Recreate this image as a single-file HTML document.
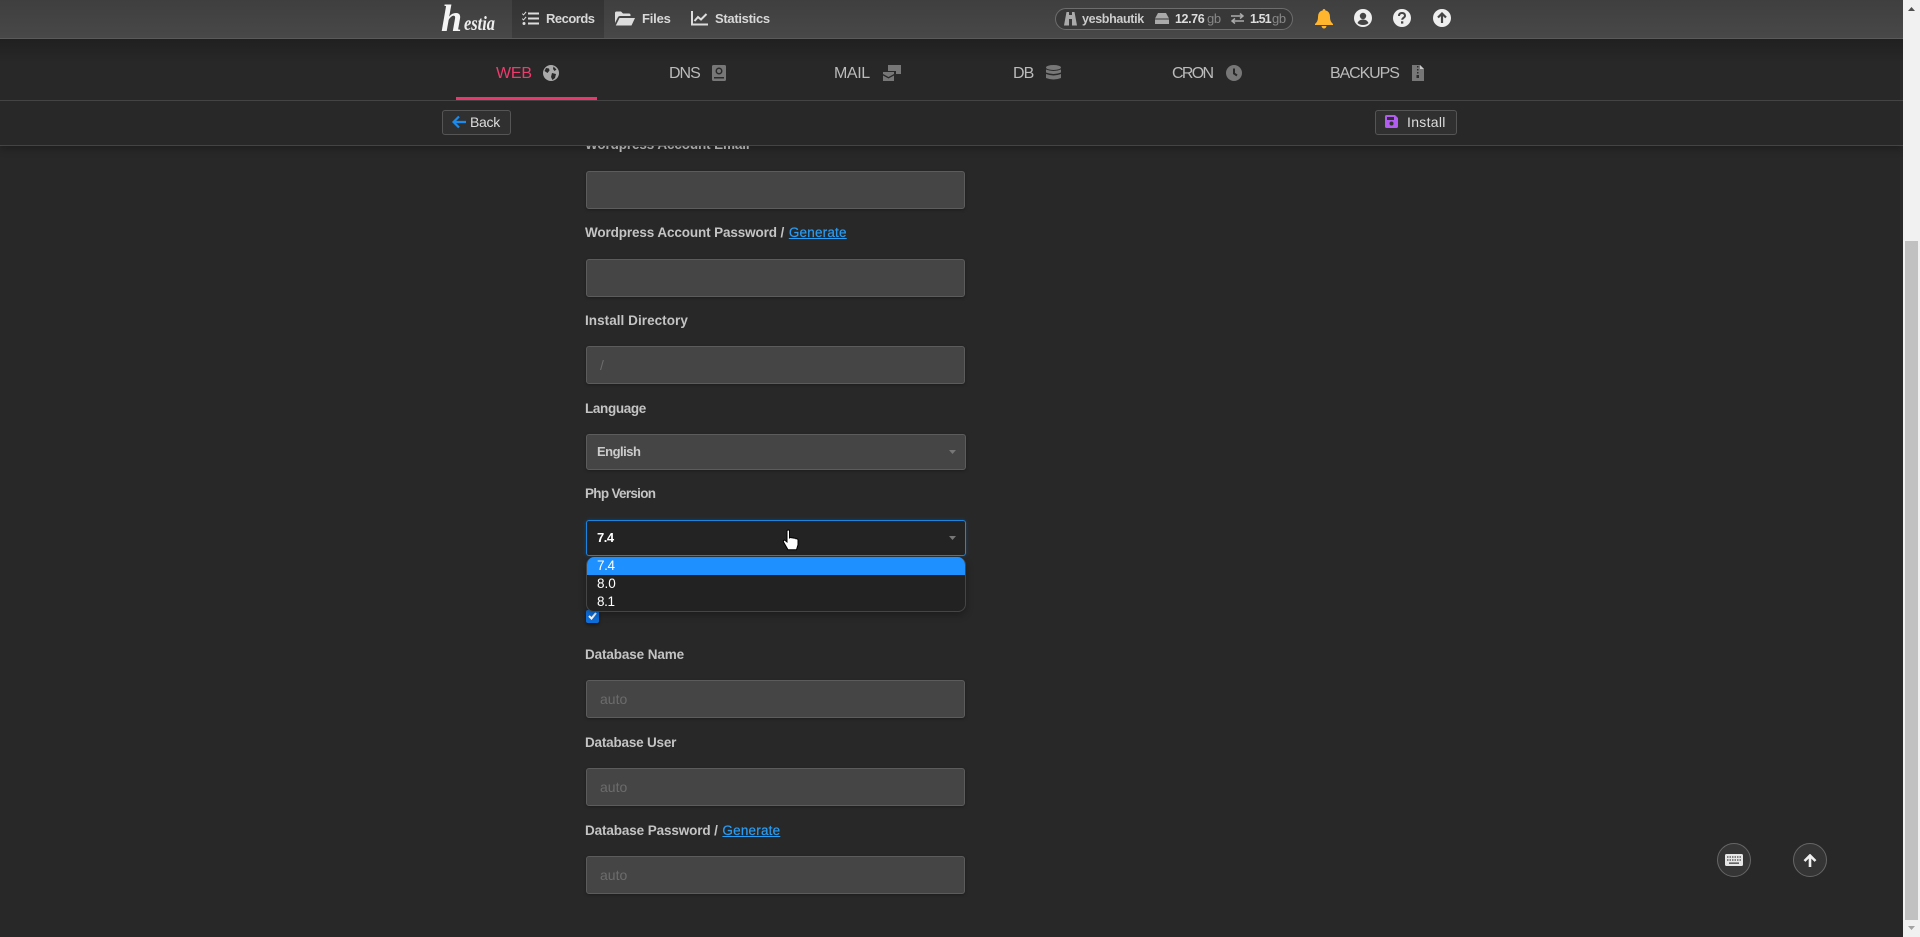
<!DOCTYPE html>
<html lang="en"><head><meta charset="utf-8"><title>Hestia</title>
<style>
*{box-sizing:border-box}
html,body{margin:0;padding:0;width:1920px;height:937px;overflow:hidden;background:#282828;font-family:"Liberation Sans",sans-serif}
.t{position:absolute;white-space:nowrap;line-height:20px;height:20px}
svg{position:absolute;display:block}
#hdr{position:absolute;left:0;top:0;width:1903px;height:39px;background:linear-gradient(#3f3f3f,#484848);border-bottom:1px solid #5a5a5a;z-index:5}
#rec{position:absolute;left:512px;top:0;width:92px;height:38px;background:linear-gradient(#333,#3c3c3c)}
#tabs{position:absolute;left:0;top:39px;width:1903px;height:62px;background:linear-gradient(#202020,#282828 40%);border-bottom:1px solid #444;z-index:5}
#bar{position:absolute;left:0;top:101px;width:1903px;height:45px;background:#282828;border-bottom:1px solid #444;box-shadow:0 3px 8px rgba(0,0,0,.25);z-index:4}
.nav{font-size:13px;font-weight:700;color:#d8d8d8;letter-spacing:-.5px}
.tab{font-size:16px;color:#bbb}
.btn{position:absolute;top:110px;height:25px;background:#303030;border:1px solid #555;border-radius:3px;z-index:6}
.lab{font-size:13.5px;font-weight:700;color:#c4c4c4;left:585px;letter-spacing:-.12px}
.lab a{color:#2a9df4;text-decoration:underline;font-weight:400;-webkit-text-stroke:.2px #2a9df4;letter-spacing:.2px;margin-left:1px}
.in{position:absolute;left:586px;width:379px;height:38px;background:#454545;border:1px solid #5c5c5c;border-radius:3px;box-shadow:0 1px 3px rgba(0,0,0,.3)}
.ph{font-size:14px;color:#6c6c6c;left:600px}
.opt{font-size:13.5px;color:#fff;left:597px;line-height:18px;height:18px}
.rnd{position:absolute;top:843px;width:34px;height:34px;border-radius:50%;background:#353535;border:1px solid #666}
</style></head><body>

<div id="hdr">
 <div id="rec"></div>
 <span class="t" style="left:441px;top:3px;font:italic 700 38px/32px 'Liberation Serif',serif;height:32px;color:#f4f4f4">h</span>
 <span class="t" style="left:464px;top:14px;font:italic 700 20px/20px 'Liberation Serif',serif;color:#eee;transform:scaleX(.82);transform-origin:left center">estia</span>

 <svg style="left:522px;top:11px" width="17" height="15" viewBox="0 0 17 15" fill="#ddd"><path d="M6 1.500h11v2H6zM6 6.500h11v2H6zM6 11.500h11v2H6zM.5 2.200l1 1L3.700.5l.8.7L1.500 4.600 0 3zM.5 7.200l1 1 2.200-2.700.8.7-3 3.400L0 8z"/><circle cx="2" cy="12.500" r="1.500"/></svg>
 <span class="t nav" style="left:546px;top:9px">Records</span>

 <svg style="left:615px;top:11px" width="20" height="16" viewBox="0 0 20 16" fill="#ddd"><path d="M0 2q0-1.500 1.500-1.500h4.500l2 2h6q1.500 0 1.500 1.500v1H5q-1.500 0-2.200 1.500L0 12z"/><path d="M4.500 7H20l-3.500 7.500H.8z"/></svg>
 <span class="t nav" style="left:642px;top:9px;letter-spacing:-.2px">Files</span>

 <svg style="left:691px;top:11px" width="17" height="15" viewBox="0 0 17 15" fill="none" stroke="#ddd" stroke-width="2"><path d="M1 0v13.500h16"/><path d="M3.500 10l3.500-4 3 2.500L15.500 3"/></svg>
 <span class="t nav" style="left:715px;top:9px;letter-spacing:-.3px">Statistics</span>

 <div style="position:absolute;left:1055px;top:8px;width:238px;height:22px;border:1px solid #6d6d6d;border-radius:11px;background:#383838"></div>
 <svg style="left:1064px;top:12px" width="13" height="14" viewBox="0 0 13 14" fill="#aaa"><path d="M2.500 0h2.500v3h3V0h2.500l2.500 13.500H8V7H5v6.500H0z"/></svg>
 <span class="t" style="left:1082px;top:9px;font-size:12.5px;font-weight:700;color:#ccc;letter-spacing:-.35px">yesbhautik</span>
 <svg style="left:1155px;top:13px" width="14" height="11" viewBox="0 0 14 11" fill="#aaa"><path d="M3 0h8l3 5.500H0z"/><path d="M0 6.500h14V11H0z"/></svg>
 <span class="t" style="left:1175px;top:9px;font-size:12.5px;font-weight:700;color:#ddd;letter-spacing:-.4px">12.76</span>
 <span class="t" style="left:1207px;top:9px;font-size:13px;color:#888;letter-spacing:-.3px">gb</span>
 <svg style="left:1231px;top:13px" width="13" height="11" viewBox="0 0 13 11" fill="none" stroke="#aaa" stroke-width="1.500"><path d="M0 3h12M9 .5L12 3 9 5.500M13 8H1M4 5.500L1 8l3 2.500"/></svg>
 <span class="t" style="left:1250px;top:9px;font-size:12.5px;font-weight:700;color:#ddd;letter-spacing:-.9px">1.51</span>
 <span class="t" style="left:1272px;top:9px;font-size:13px;color:#888;letter-spacing:-.3px">gb</span>

 <svg style="left:1315px;top:9px" width="18" height="20" viewBox="0 0 18 20" fill="#ffb52e"><path d="M9 0q1.300 0 1.300 1.400Q15 2.400 15 8c0 4 1.500 5.500 3 7v1H0v-1c1.500-1.500 3-3 3-7q0-5.600 4.700-6.600Q7.700 0 9 0z"/><path d="M6.500 17h5q-.5 2.500-2.500 2.500T6.500 17z"/></svg>
 <svg style="left:1354px;top:9px" width="18" height="18" viewBox="0 0 18 18"><circle cx="9" cy="9" r="9" fill="#eee"/><circle cx="9" cy="7" r="3.200" fill="#444"/><path d="M3.500 14q1.500-3.500 5.500-3.500t5.500 3.500q-2 2-5.500 2t-5.500-2z" fill="#444"/></svg>
 <svg style="left:1393px;top:9px" width="18" height="18" viewBox="0 0 18 18"><circle cx="9" cy="9" r="9" fill="#eee"/><path d="M6 7q0-3 3-3t3 2.800c0 2-2.800 2-2.800 4" fill="none" stroke="#444" stroke-width="2"/><rect x="8" y="12.300" width="2.300" height="2.300" fill="#444"/></svg>
 <svg style="left:1433px;top:9px" width="18" height="18" viewBox="0 0 18 18"><circle cx="9" cy="9" r="9" fill="#eee"/><path d="M9 14V5M5 8.500L9 4.500l4 4" fill="none" stroke="#444" stroke-width="2.200"/></svg>
</div>

<div id="tabs">
 <div style="position:absolute;left:456px;top:58px;width:141px;height:3px;background:#e8386d"></div>
 <span class="t tab" style="left:496px;top:25px;color:#f03a6e;letter-spacing:-.2px">WEB</span>
 <svg style="left:543px;top:26px" width="16" height="16" viewBox="0 0 16 16"><circle cx="8" cy="8" r="8" fill="#aaa"/><path d="M3 3l3 .5.5 2-2 2.500-3-2zM9 8l4 1-1 4-2.500 2-1.500-3zM10.500 1.500l3 3-2 1.500-1.500-2z" fill="#2a2a2a"/></svg>
 <span class="t tab" style="left:669px;top:25px;letter-spacing:-1px">DNS</span>
 <svg style="left:712px;top:26px" width="14" height="16" viewBox="0 0 14 16"><rect width="14" height="16" rx="1.500" fill="#777"/><circle cx="7" cy="6" r="3.500" fill="#2a2a2a"/><circle cx="7" cy="6" r="2" fill="#777"/><rect x="2" y="12" width="10" height="1.500" fill="#2a2a2a"/></svg>
 <span class="t tab" style="left:834px;top:25px;letter-spacing:-.4px">MAIL</span>
 <svg style="left:883px;top:26px" width="18" height="16" viewBox="0 0 18 16" fill="#777"><path d="M5 0h13v9h-5V6H5z"/><path d="M0 7h11v2L5.500 12 0 9zM0 10.500l5.500 3 5.500-3V16H0z"/></svg>
 <span class="t tab" style="left:1013px;top:25px;letter-spacing:-.9px">DB</span>
 <svg style="left:1046px;top:26px" width="15" height="16" viewBox="0 0 15 16" fill="#777"><ellipse cx="7.500" cy="2.500" rx="7.500" ry="2.500"/><path d="M0 4.500q7.500 3 15 0V7.500q-7.500 3-15 0zM0 9q7.500 3 15 0v4q-7.500 3-15 0z"/></svg>
 <span class="t tab" style="left:1172px;top:25px;letter-spacing:-1.700px">CRON</span>
 <svg style="left:1226px;top:26px" width="16" height="16" viewBox="0 0 16 16"><circle cx="8" cy="8" r="8" fill="#777"/><path d="M8 3.500v5l3 2" fill="none" stroke="#282828" stroke-width="2"/></svg>
 <span class="t tab" style="left:1330px;top:25px;letter-spacing:-1.100px">BACKUPS</span>
 <svg style="left:1412px;top:26px" width="12" height="16" viewBox="0 0 12 16"><path d="M0 0h8l4 4v12H0z" fill="#777"/><path d="M8 0v4h4z" fill="#ccc"/><path d="M5 1h1.500v1.500H5zM5 4h1.500v1.500H5zM5 7h1.500v1.500H5zM4.500 10h2.500v3H4.500z" fill="#2a2a2a"/></svg>
</div>

<div id="bar"></div>
<div class="btn" style="left:442px;width:69px"></div>
<svg style="left:452px;top:115px;z-index:7" width="14" height="14" viewBox="0 0 14 14" fill="none" stroke="#1a8cf0" stroke-width="2.200"><path d="M14 7H2M7 1.500L1.500 7 7 12.500"/></svg>
<span class="t" style="left:470px;top:112px;font-size:14px;color:#ddd;z-index:7;letter-spacing:-.3px">Back</span>
<div class="btn" style="left:1375px;width:82px"></div>
<svg style="left:1385px;top:115px;z-index:7" width="13" height="13" viewBox="0 0 13 13"><path d="M1.500 0H10l3 3v8.500q0 1.500-1.500 1.500h-10Q0 13 0 11.500v-10Q0 0 1.500 0z" fill="#b35cf2"/><rect x="2" y="2" width="7" height="3" fill="#303030"/><circle cx="6.500" cy="8.500" r="2" fill="#303030"/></svg>
<span class="t" style="left:1407px;top:112px;font-size:14px;color:#ddd;z-index:7;letter-spacing:.3px">Install</span>

<span class="t lab" style="top:135px">Wordpress Account Email</span>
<div class="in" style="top:171px"></div>
<span class="t lab" style="top:223px">Wordpress Account Password / <a>Generate</a></span>
<div class="in" style="top:259px"></div>
<span class="t lab" style="top:311px;letter-spacing:.05px">Install Directory</span>
<div class="in" style="top:346px"></div>
<span class="t ph" style="top:355px">/</span>
<span class="t lab" style="top:399px;letter-spacing:-.35px">Language</span>
<div class="in" style="top:434px;width:380px;height:36px"></div>
<span class="t" style="left:597px;top:442px;font-size:13px;font-weight:700;color:#ccc;letter-spacing:-.5px">English</span>
<svg style="left:949px;top:450px" width="7" height="4"><path d="M0 0h7L3.500 4z" fill="#777"/></svg>
<span class="t lab" style="top:484px;letter-spacing:-.7px">Php Version</span>
<div class="in" style="top:520px;width:380px;height:36px;background:#232323;border-color:#1a84e0;box-shadow:0 0 4px rgba(26,132,224,.3)"></div>
<span class="t" style="left:597px;top:528px;font-size:13px;font-weight:700;color:#fff;letter-spacing:-.5px">7.4</span>
<svg style="left:949px;top:536px" width="7" height="4"><path d="M0 0h7L3.500 4z" fill="#777"/></svg>

<div style="position:absolute;left:586px;top:610px;width:13px;height:13px;background:#0e6fdc;border-radius:2px;box-shadow:0 2px 3px rgba(0,0,0,.4)"></div>
<svg style="left:588px;top:612px" width="9" height="8"><path d="M1 4l2.500 2.500L8 1" fill="none" stroke="#fff" stroke-width="2"/></svg>

<div style="position:absolute;left:586px;top:557px;width:380px;height:55px;background:#222;border:1px solid #454545;border-top:0;border-radius:8px;overflow:hidden;box-shadow:0 3px 8px rgba(0,0,0,.3)">
 <div style="height:18px;background:#1e90ff"></div>
</div>
<span class="t opt" style="top:557px;letter-spacing:-.4px">7.4</span>
<span class="t opt" style="top:575px">8.0</span>
<span class="t opt" style="top:593px;letter-spacing:-.4px">8.1</span>

<span class="t lab" style="top:645px">Database Name</span>
<div class="in" style="top:680px"></div>
<span class="t ph" style="top:689px">auto</span>
<span class="t lab" style="top:733px;letter-spacing:-.2px">Database User</span>
<div class="in" style="top:768px"></div>
<span class="t ph" style="top:777px">auto</span>
<span class="t lab" style="top:821px">Database Password / <a>Generate</a></span>
<div class="in" style="top:856px"></div>
<span class="t ph" style="top:865px">auto</span>

<svg style="left:782px;top:529px;z-index:8" width="18" height="23" viewBox="0 0 18 23"><path d="M5 1.500q1.500-1 2.500 0V9l1-.5q1-.3 1.500.5 1.200-.6 2 .3 1.300-.6 2 .5 1.500-.3 2 1v5l-1.500 5H6L1.500 13q-.5-1.500 1-2L5 13z" fill="#fff" stroke="#000" stroke-width="1"/></svg>

<div class="rnd" style="left:1717px"></div>
<svg style="left:1725px;top:854px" width="18" height="12" viewBox="0 0 18 12"><rect width="18" height="12" rx="1.500" fill="#e6e6e6"/><path d="M2 3h14M2 6h14" stroke="#444" stroke-width="1.300" stroke-dasharray="1.500 1"/><rect x="4" y="8.500" width="10" height="1.300" fill="#444"/></svg>
<div class="rnd" style="left:1793px"></div>
<svg style="left:1803px;top:854px" width="14" height="13" viewBox="0 0 14 13"><path d="M7 13V2M1.500 7L7 1.500 12.500 7" fill="none" stroke="#f0f0f0" stroke-width="2.600"/></svg>

<div style="position:absolute;left:1903px;top:0;width:17px;height:937px;background:#f1f1f1;z-index:9">
 <div style="position:absolute;left:2px;top:241px;width:13px;height:679px;background:#c1c1c1"></div>
 <svg style="left:5px;top:7px" width="7" height="4"><path d="M3.500 0L7 4H0z" fill="#505050"/></svg>
 <svg style="left:5px;top:926px" width="7" height="4"><path d="M0 0h7L3.500 4z" fill="#a3a3a3"/></svg>
</div>
</body></html>
